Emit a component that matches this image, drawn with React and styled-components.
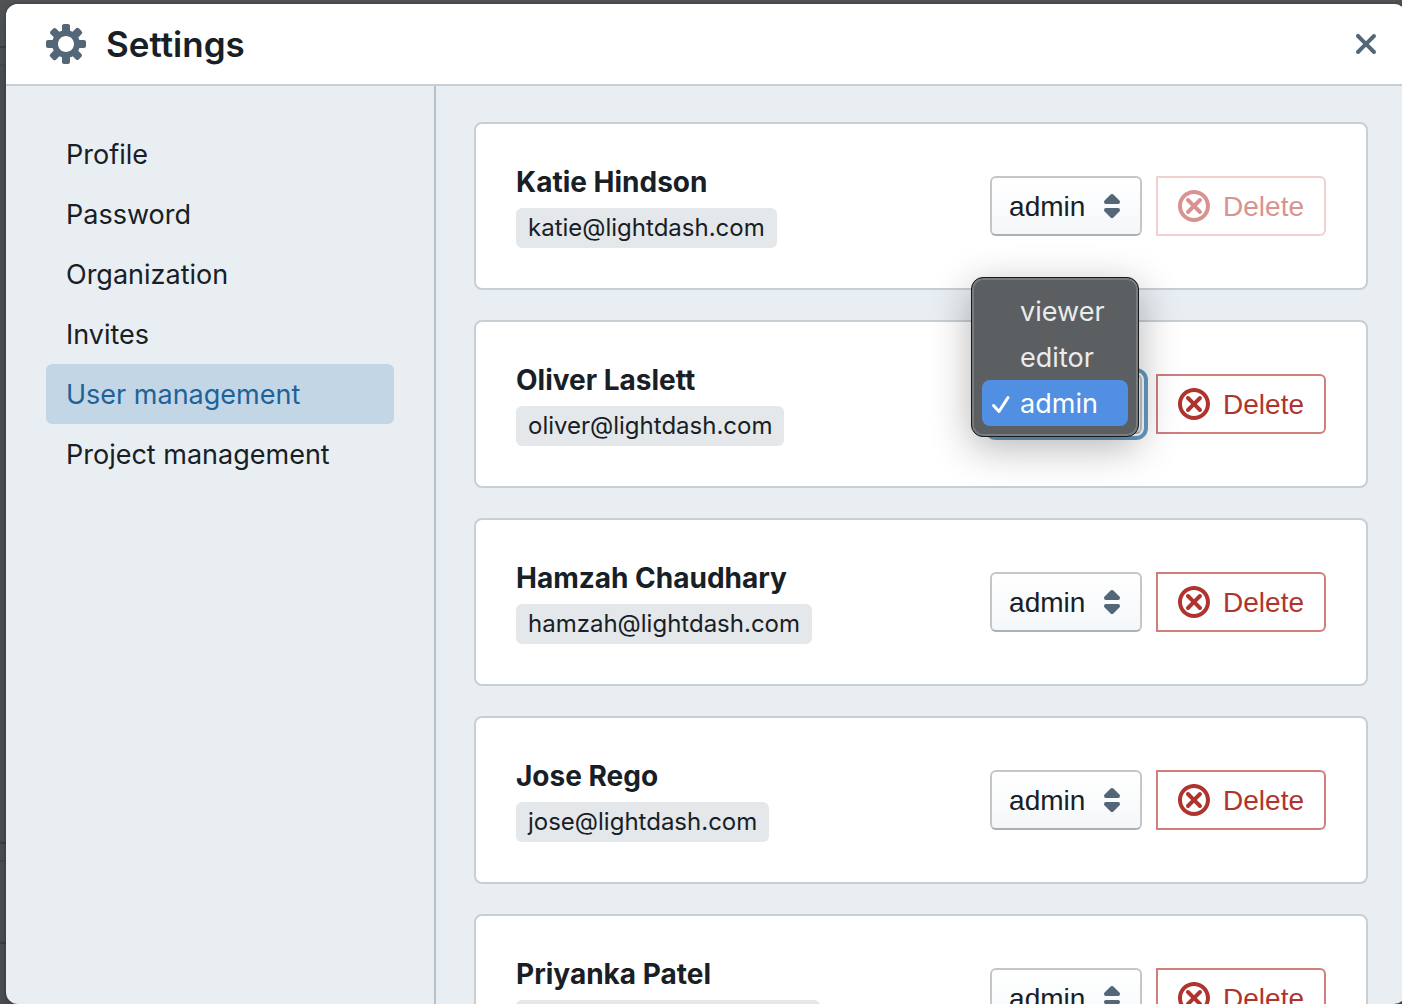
import { useState } from "react";
import styled, { createGlobalStyle, css } from "styled-components";

const GlobalStyle = createGlobalStyle`
  * {
    box-sizing: border-box;
  }
  body {
    margin: 0;
    overflow: hidden;
    color: #182026;
    font-family: Inter, "Liberation Sans", sans-serif;
    font-size: 27px;
  }
`;

const Backdrop = styled.div`
  height: 100vh;
  padding: 4px 0 0 6px;
  overflow: hidden;
  /* dimmed page with its divider lines behind the dialog */
  background: linear-gradient(
    to bottom,
    #505356 46px,
    #3f4144 46px 48px,
    #4f5255 48px 64px,
    #47494c 64px 66px,
    #4c4f52 66px 842px,
    #3d4042 842px 844px,
    #4c4f52 844px 860px,
    #45484a 860px 862px,
    #4c4f52 862px 942px,
    #3d4042 942px 944px,
    #4c4f52 944px
  );
`;

const Dialog = styled.div`
  display: flex;
  flex-direction: column;
  height: 100%;
  margin-right: -4px;
  border-radius: 12px;
  overflow: hidden;
  background-color: #e9eef2;
  box-shadow: 0 0 0 2px rgba(16, 22, 26, 0.1), 0 8px 16px rgba(16, 22, 26, 0.2);
`;

const Header = styled.header`
  display: flex;
  align-items: center;
  flex: none;
  height: 82px;
  padding: 0 20px 0 40px;
  background-color: #fff;
  border-bottom: 2px solid #c8cfd4;
`;

const Title = styled.h1`
  flex: 1;
  margin: 0 0 0 20px;
  font-size: 35px;
  font-weight: 600;
  line-height: 40px;
`;

const CloseButton = styled.button`
  display: flex;
  padding: 0;
  border: none;
  background: none;
  cursor: pointer;
`;

const Icon = styled.svg`
  display: block;
  flex: none;
  width: ${(props) => props.$size}px;
  height: ${(props) => props.$size}px;
  fill: currentColor;
`;

const HeaderIcon = styled(Icon)`
  color: #546778;
`;

const Body = styled.div`
  display: flex;
  flex: 1;
  min-height: 0;
`;

const Sidebar = styled.nav`
  flex: 0 0 430px;
  padding: 38px 40px;
  border-right: 2px solid #b4c1cb;
`;

const MenuItem = styled.a`
  display: block;
  padding: 2px 20px 0;
  border-radius: 6px;
  line-height: 58px;
  text-decoration: none;
  color: ${(props) => (props.$active ? "#1f6299" : "#182026")};
  background-color: ${(props) => (props.$active ? "#c3d6e5" : "transparent")};
`;

const Content = styled.main`
  display: flex;
  flex-direction: column;
  flex: 1;
  gap: 30px;
  padding: 36px 38px;
  overflow: hidden;
`;

const Card = styled.section`
  display: flex;
  align-items: center;
  justify-content: space-between;
  flex: none;
  height: 168px;
  padding: 0 40px;
  border: 2px solid #c8cfd4;
  border-radius: 8px;
  background-color: #fff;
`;

const UserName = styled.h2`
  margin: 0 0 8px;
  font-size: 28px;
  font-weight: 700;
  line-height: 36px;
`;

const Email = styled.span`
  display: inline-block;
  padding: 0 12px;
  border-radius: 6px;
  background-color: #e4e8eb;
  font-size: 24px;
  line-height: 40px;
  vertical-align: top;
`;

const Actions = styled.div`
  display: flex;
  gap: 14px;
`;

const SelectWrapper = styled.div`
  position: relative;
  width: 152px;
`;

const controlFont = css`
  font-family: "Liberation Sans", Arial, sans-serif;
  font-size: 28px;
`;

const RoleSelect = styled.select`
  ${controlFont}
  appearance: none;
  width: 100%;
  height: 60px;
  padding: 0 50px 0 17px;
  border: 2px solid #c3c7ca;
  border-bottom-color: #abb0b4;
  border-radius: 6px;
  background: linear-gradient(to bottom, #fff, #f4f7f9);
  color: #182026;
  outline: ${(props) => (props.$open ? "4px solid #669bc4" : "none")};
  outline-offset: 2px;
`;

const CaretIcon = styled(Icon)`
  position: absolute;
  top: 14px;
  right: 14px;
  color: #546778;
  pointer-events: none;
`;

const Menu = styled.ul`
  position: absolute;
  z-index: 1;
  top: -97px;
  left: -19px;
  width: 168px;
  margin: 0;
  padding: 10px;
  border: 1px solid #17191a;
  border-radius: 12px;
  background-color: #5b5f61;
  box-shadow: inset 0 0 0 2px #797c7e, 0 10px 40px rgba(0, 0, 0, 0.3);
  list-style: none;
`;

const MenuOption = styled.li`
  display: flex;
  align-items: center;
  height: 46px;
  padding-left: 8px;
  gap: 8px;
  border-radius: 8px;
  color: ${(props) => (props.$selected ? "#fff" : "#ebebeb")};
  background-color: ${(props) => (props.$selected ? "#508fe1" : "transparent")};
  cursor: default;
`;

const CheckMark = styled.svg`
  width: 22px;
  height: 22px;
  fill: none;
  stroke: #fff;
  stroke-width: 3;
  stroke-linecap: round;
  stroke-linejoin: round;
  visibility: ${(props) => (props.$visible ? "visible" : "hidden")};
`;

const DeleteButton = styled.button`
  ${controlFont}
  display: flex;
  align-items: center;
  gap: 13px;
  height: 60px;
  padding: 0 20px;
  border: 2px solid #cf7e7c;
  border-radius: 0 6px 6px 0;
  background-color: #fff;
  color: #b0342e;
  line-height: 33px;
  cursor: pointer;

  &:disabled {
    border-color: #efd1d0;
    color: #d89390;
    cursor: not-allowed;
  }
`;

const menuItems = [
  "Profile",
  "Password",
  "Organization",
  "Invites",
  "User management",
  "Project management",
];

const roles = ["viewer", "editor", "admin"];

const users = [
  { name: "Katie Hindson", email: "katie@lightdash.com", disabled: true },
  { name: "Oliver Laslett", email: "oliver@lightdash.com" },
  { name: "Hamzah Chaudhary", email: "hamzah@lightdash.com" },
  { name: "Jose Rego", email: "jose@lightdash.com" },
  { name: "Priyanka Patel", email: "priyanka@lightdash.com" },
];

const RoleMenu = ({ role, onSelect }) => (
  <Menu role="listbox" aria-label="Role">
    {roles.map((item) => (
      <MenuOption
        key={item}
        role="option"
        aria-selected={item === role}
        $selected={item === role}
        onClick={() => onSelect(item)}
      >
        <CheckMark viewBox="0 0 22 22" $visible={item === role}>
          <path d="M3.500 13.500L9 19.500L18 5.500" />
        </CheckMark>
        {item}
      </MenuOption>
    ))}
  </Menu>
);

const UserCard = ({ user, open, onClose }) => {
  const [role, setRole] = useState("admin");

  const handleSelect = (item) => {
    setRole(item);
    onClose();
  };

  return (
    <Card>
      <div>
        <UserName>{user.name}</UserName>
        <Email>{user.email}</Email>
      </div>
      <Actions>
        <SelectWrapper>
          <RoleSelect
            aria-label={`Role of ${user.name}`}
            value={role}
            $open={open}
            onChange={(e) => setRole(e.target.value)}
          >
            {roles.map((item) => (
              <option key={item} value={item}>
                {item}
              </option>
            ))}
          </RoleSelect>
          <CaretIcon $size={32} viewBox="0 0 16 16">
            <path d="M5 7h6a1.003 1.003 0 00.71-1.71l-3-3C8.53 2.11 8.28 2 8 2s-.53.11-.71.29l-3 3A1.003 1.003 0 005 7zm6 2H5a1.003 1.003 0 00-.71 1.71l3 3c.18.18.43.29.71.29s.53-.11.71-.29l3-3A1.003 1.003 0 0011 9z" />
          </CaretIcon>
          {open && <RoleMenu role={role} onSelect={handleSelect} />}
        </SelectWrapper>
        <DeleteButton type="button" disabled={user.disabled}>
          <Icon $size={32} viewBox="0 0 16 16">
            <path d="M11.99 4.99a1.003 1.003 0 00-1.71-.71l-2.29 2.3L5.7 4.29a.965.965 0 00-.71-.3 1.003 1.003 0 00-.71 1.71l2.29 2.29-2.29 2.29c-.18.18-.29.43-.29.71a1.003 1.003 0 001.71.71l2.29-2.29 2.29 2.29c.18.18.43.29.71.29a1.003 1.003 0 00.71-1.71L9.41 7.99 11.7 5.7c.18-.18.29-.43.29-.71zm-4-5c-4.42 0-8 3.58-8 8s3.58 8 8 8 8-3.58 8-8-3.58-8-8-8zm0 14c-3.31 0-6-2.69-6-6s2.69-6 6-6 6 2.69 6 6-2.69 6-6 6z" />
          </Icon>
          Delete
        </DeleteButton>
      </Actions>
    </Card>
  );
};

const App = () => {
  const [activeItem, setActiveItem] = useState("User management");
  const [openUser, setOpenUser] = useState("Oliver Laslett");

  return (
    <>
      <GlobalStyle />
      <Backdrop>
        <Dialog role="dialog" aria-labelledby="settings-title">
          <Header>
            <HeaderIcon $size={40} viewBox="0 0 20 20">
              <path d="M19 8h-2.31c-.14-.46-.33-.89-.56-1.3l1.7-1.7a.996.996 0 000-1.41l-1.41-1.41a.996.996 0 00-1.41 0l-1.7 1.7c-.41-.22-.84-.41-1.3-.55V1c0-.55-.45-1-1-1H9c-.55 0-1 .45-1 1v2.33c-.48.14-.94.34-1.37.58L5 2.28a.972.972 0 00-1.36 0L2.28 3.64c-.37.38-.37.99 0 1.36L3.9 6.62c-.24.44-.44.89-.59 1.38H1c-.55 0-1 .45-1 1v2c0 .55.45 1 1 1h2.31c.14.46.33.89.56 1.3L2.17 15a.996.996 0 000 1.41l1.41 1.41c.39.39 1.02.39 1.41 0l1.7-1.7c.41.22.84.41 1.3.55V19c0 .55.45 1 1 1h2c.55 0 1-.45 1-1v-2.33c.48-.14.94-.35 1.37-.59L15 17.72c.37.37.98.37 1.36 0l1.36-1.36c.37-.37.37-.98 0-1.36l-1.62-1.62c.24-.43.45-.89.6-1.38H19c.55 0 1-.45 1-1V9c0-.55-.45-1-1-1zm-9 6c-2.21 0-4-1.79-4-4s1.79-4 4-4 4 1.79 4 4-1.79 4-4 4z" />
            </HeaderIcon>
            <Title id="settings-title">Settings</Title>
            <CloseButton type="button" aria-label="Close">
              <HeaderIcon $size={40} viewBox="0 0 20 20">
                <path d="M11.41 10l3.29-3.29c.19-.18.3-.43.3-.71a1.003 1.003 0 00-1.71-.71L10 8.59l-3.29-3.3a1.003 1.003 0 00-1.42 1.42L8.59 10 5.3 13.29c-.19.18-.3.43-.3.71a1.003 1.003 0 001.71.71l3.29-3.3 3.29 3.29c.18.19.43.3.71.3a1.003 1.003 0 00.71-1.71L11.41 10z" />
              </HeaderIcon>
            </CloseButton>
          </Header>
          <Body>
            <Sidebar>
              {menuItems.map((item) => (
                <MenuItem
                  key={item}
                  href="#"
                  $active={item === activeItem}
                  onClick={() => setActiveItem(item)}
                >
                  {item}
                </MenuItem>
              ))}
            </Sidebar>
            <Content>
              {users.map((user) => (
                <UserCard
                  key={user.email}
                  user={user}
                  open={user.name === openUser}
                  onClose={() => setOpenUser(null)}
                />
              ))}
            </Content>
          </Body>
        </Dialog>
      </Backdrop>
    </>
  );
};

export default App;
